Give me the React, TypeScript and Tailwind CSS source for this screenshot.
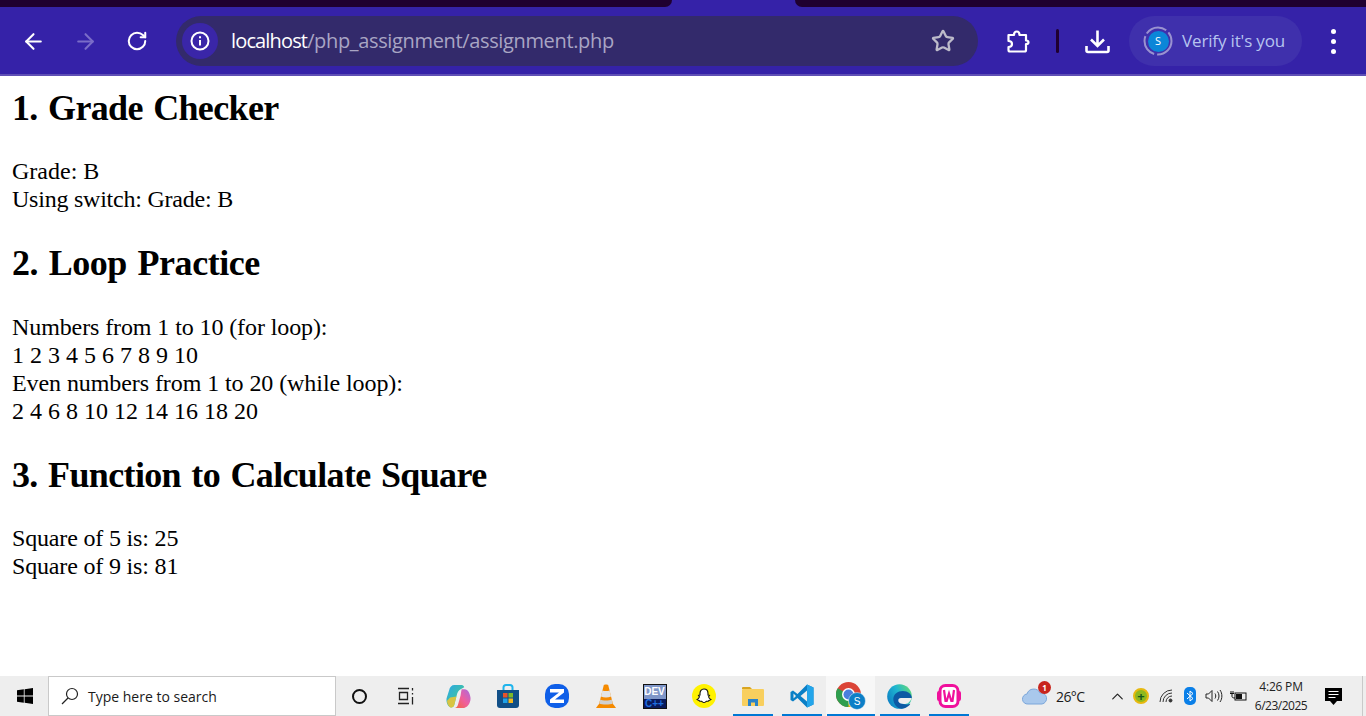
import { ArrowLeft, ArrowRight, RotateCw, Star, ChevronUp } from 'lucide-react'
import type { ReactNode } from 'react'

const Heading = ({ children, className }: { children: ReactNode, className: string }) => (
    <h2 className={`text-[36px] leading-[41px] font-bold [word-spacing:2px] ${className}`}>{children}</h2>
)

const Slot = ({ children, line, active }: { children: ReactNode, line?: boolean, active?: boolean }) => (
    <div className={`relative h-10 w-[49px] shrink-0 flex items-center justify-center ${active ? 'bg-[#f7f7f7]' : ''}`}>
        {children}
        {line && <div className={`absolute bottom-0 h-[2px] bg-[#0078d4] ${active ? 'left-px right-0' : 'left-[5px] right-[4px]'}`} />}
    </div>
)

const Copilot = () => (
    <svg width="25" height="25" viewBox="0 0 24 24">
        <defs>
            <linearGradient id="cpa" x1="0" y1="0" x2="1" y2="1">
                <stop offset="0" stopColor="#2aa7e8" />
                <stop offset="0.6" stopColor="#3fc0a8" />
                <stop offset="1" stopColor="#8fd14a" />
            </linearGradient>
            <linearGradient id="cpb" x1="0" y1="1" x2="1" y2="0">
                <stop offset="0" stopColor="#f2653a" />
                <stop offset="0.5" stopColor="#ef5f9e" />
                <stop offset="1" stopColor="#a86be0" />
            </linearGradient>
        </defs>
        <path d="M8 1h7c1.500 0 2 1 2.500 2L14 5c-2 1-3 3-3.500 5L8 20c-.5 2-2 3-3.500 2.500C2 22 0 18 .5 14L3 6c.6-3 2.500-5 5-5z" fill="url(#cpa)" />
        <path d="M4 13l6-1-2 8c-.5 2-2 3-3.500 2.500C3 22 1 19 1 16z" fill="#f5c52e" opacity="0.850" />
        <path d="M15 5h3c3 0 5 4 5.500 8 .5 4-2 9-6 10H8c2 0 3-1 3.500-3L14 11c.3-2 .5-4 1-6z" fill="url(#cpb)" />
    </svg>
)

const Store = () => (
    <svg width="24" height="25" viewBox="0 0 24 25">
        <path d="M7.500 7V3.500C7.500 2 8.500 1 10 1h4c1.500 0 2.500 1 2.500 2.500V7" fill="none" stroke="#1fb4ec" strokeWidth="2" />
        <path d="M1 6h22v15c0 2-1 3-3 3H4c-2 0-3-1-3-3z" fill="#114f87" />
        <rect x="7" y="9" width="4.500" height="4.500" fill="#e8522a" />
        <rect x="12.500" y="9" width="4.500" height="4.500" fill="#7db928" />
        <rect x="7" y="14.500" width="4.500" height="4.500" fill="#1fa2e8" />
        <rect x="12.500" y="14.500" width="4.500" height="4.500" fill="#f5b81e" />
    </svg>
)

const Zoom = () => (
    <svg width="24" height="24" viewBox="0 0 24 24">
        <rect width="24" height="24" rx="10" fill="#0f5fe8" />
        <path d="M5 5h14v3.500L10 15.500h9V19H5v-3.500L14 8.500H5z" fill="#fff" />
    </svg>
)

const Vlc = () => (
    <svg width="20" height="25" viewBox="0 0 20 25">
        <path d="M0 24l2.500-3.500h15L20 24z" fill="#f58a00" />
        <path d="M7.800 1c.5-.8 3.900-.8 4.400 0l5 20c-3 1.500-11.400 1.500-14.400 0z" fill="#f58a00" />
        <path d="M6.400 6.500c2 .8 5.200.8 7.200 0l1.500 6c-3 1.200-7.200 1.200-10.200 0z" fill="#e4e4e4" />
        <path d="M4.300 15.500c2 1.300 9.400 1.300 11.400 0l1 4c-2.500 1.300-10.900 1.300-13.400 0z" fill="#d0d0d0" />
    </svg>
)

const Chrome = () => (
    <svg width="30" height="28" viewBox="0 0 30 28">
        <circle cx="12.500" cy="12.500" r="12.500" fill="#db4437" />
        <path d="M12.500 12.500L1.700 6.200A12.500 12.500 0 0 0 12.500 25l6-10.500z" fill="#2f9e4f" />
        <path d="M12.500 12.500h12A12.500 12.500 0 0 1 12.500 25z" fill="#f4c20d" />
        <circle cx="12.500" cy="12.500" r="6.500" fill="#fff" />
        <circle cx="12.500" cy="12.500" r="5" fill="#4a7fdd" />
        <circle cx="21" cy="19" r="8.500" fill="#0d7fc7" stroke="#f7f7f7" strokeWidth="0.500" />
        <text x="21" y="22.500" textAnchor="middle" fontSize="10" fontFamily="Liberation Sans, sans-serif" fill="#fff">S</text>
    </svg>
)

const Edge = () => (
    <svg width="25" height="25" viewBox="0 0 25 25">
        <defs>
            <linearGradient id="edga" x1="0" y1="0.700" x2="1" y2="0.200">
                <stop offset="0" stopColor="#0d7fc4" />
                <stop offset="0.500" stopColor="#1fb6d0" />
                <stop offset="1" stopColor="#62d977" />
            </linearGradient>
        </defs>
        <circle cx="12.500" cy="12.500" r="12.300" fill="url(#edga)" />
        <path d="M24.800 14c0-4-4-7-9-7-5 0-9.500 3-9.500 8 0 5 4 9.800 8.500 9.700 3.500-.3 7.500-2.500 8.500-5-2 1-8 1.500-9.500-1.700-.8-2 .5-3.500 2.500-3.500h8.500z" fill="#0c59a4" />
        <path d="M14 14c-2 0-3.300 1.500-2.500 3.500 1.500 3.200 7.500 2.700 9.500 1.700 1.500-1.500 3.300-3.500 3.800-5.200z" fill="#eeeeee" />
    </svg>
)

const Wamp = () => (
    <svg width="24" height="24" viewBox="0 0 24 24">
        <rect x="0" y="7" width="24" height="10" rx="2" fill="#f0109c" />
        <rect x="3" y="1.500" width="18" height="21" rx="5.500" fill="#fff" stroke="#f0109c" strokeWidth="3" />
        <path d="M7 6l1.500 11h1.200L12 9.500 14.300 17h1.200L17 6" fill="none" stroke="#f0109c" strokeWidth="2.200" />
    </svg>
)

const App = () => {
    return (
        <div className="h-[716px] w-[1366px] overflow-hidden flex flex-col bg-white font-['Liberation_Serif',serif] text-black">
            <header className="h-[76px] shrink-0 bg-[#3522a8] border-b-2 border-[#5f4fb5] flex flex-col rounded-tl-[4px]">
                <div className="h-[7px] flex justify-between">
                    <div className="w-[672px] bg-[#1f0030] rounded-br-[8px]" />
                    <div className="w-[571px] bg-[#1f0030] rounded-bl-[8px]" />
                </div>
                <div className="flex-1 flex items-center font-['Open_Sans',sans-serif] pt-px">
                    <div className="flex items-center w-[176px] pl-[21px] gap-[27px]">
                        <ArrowLeft size={25} strokeWidth={2} className="text-white" />
                        <ArrowRight size={25} strokeWidth={2} className="text-[#7a6cc8]" />
                        <RotateCw size={22} strokeWidth={2.200} className="ml-px text-white" />
                    </div>
                    <div className="w-[802px] h-[50px] rounded-full bg-[#332a6b] flex items-center pl-[6px] pr-[23px]">
                        <div className="w-9 h-9 rounded-full bg-[#3a26a8] flex items-center justify-center">
                            <svg width="20" height="20" viewBox="0 0 20 20" fill="none" stroke="#fff" strokeWidth="2">
                                <circle cx="10" cy="10" r="8.500" />
                                <path d="M10 9v5.500M10 5.200v2" />
                            </svg>
                        </div>
                        <div className="ml-[13px] text-[20px] tracking-[-0.35px] text-[#a9a5c4] flex-1 whitespace-nowrap">
                            <span className="text-white tracking-[-0.85px]">localhost</span>/php_assignment/assignment.php
                        </div>
                        <Star size={24} strokeWidth={2.300} className="text-[#bdbbca]" />
                    </div>
                    <div className="ml-[27px] w-[26px] flex justify-center">
                        <svg width="25" height="25" viewBox="0 0 25 25" fill="none" stroke="#fff" strokeWidth="2.200" strokeLinejoin="round">
                            <path d="M2.500 6H8c0-2 1-3.500 2.800-3.500S13.500 4 13.500 6h6.500v5.500c1.500 0 2.500.5 2.500 1.800s-1 1.800-2.500 1.800V21a1.500 1.500 0 0 1-1.500 1.500H4A1.500 1.500 0 0 1 2.500 21v-3c2 0 3.500-1 3.500-3s-1.500-3-3.500-3z" />
                        </svg>
                    </div>
                    <div className="ml-[25px] w-[3px] h-6 rounded-full bg-[#1f0030]" />
                    <div className="ml-[25px] w-[26px] flex justify-center">
                        <svg width="25" height="25" viewBox="0 0 25 25" fill="none" stroke="#fff" strokeWidth="2.600">
                            <path d="M12.500 1.500v15M6 10.500l6.500 6.500 6.500-6.500" />
                            <path d="M1.500 17v4.500a1.500 1.500 0 0 0 1.500 1.500h19a1.500 1.500 0 0 0 1.500-1.500V17" />
                        </svg>
                    </div>
                    <div className="ml-[19px] w-[173px] h-[50px] rounded-full bg-[#3f30ac] flex items-center pl-[14px]">
                        <div className="relative w-[30px] h-[30px] flex items-center justify-center">
                            <svg width="30" height="30" viewBox="0 0 30 30" fill="none" className="absolute inset-0">
                                <circle cx="15" cy="15" r="13.500" stroke="#9a92d0" strokeWidth="2" strokeDasharray="22 3" />
                            </svg>
                            <div className="w-[21px] h-[21px] rounded-full bg-[#0b86d8] text-white text-[11px] flex items-center justify-center">S</div>
                        </div>
                        <span className="ml-[9px] text-[17px] tracking-[-0.15px] text-[#b6c4f0] whitespace-nowrap">Verify it's you</span>
                    </div>
                    <div className="ml-[29px] flex flex-col gap-[5px]">
                        <div className="w-[5px] h-[5px] rounded-full bg-white" />
                        <div className="w-[5px] h-[5px] rounded-full bg-white" />
                        <div className="w-[5px] h-[5px] rounded-full bg-white" />
                    </div>
                </div>
            </header>

            <main className="flex-1 px-3 pt-3 text-[24px] leading-[28px]">
                <Heading className="mb-[28px] tracking-[-0.65px]">1. Grade Checker</Heading>
                <div>Grade: B</div>
                <div className="tracking-[-0.23px]">Using switch: Grade: B</div>
                <Heading className="mt-[30px] mb-[29px] tracking-[-0.44px]">2. Loop Practice</Heading>
                <div className="tracking-[-0.1px]">Numbers from 1 to 10 (for loop):</div>
                <div>1 2 3 4 5 6 7 8 9 10</div>
                <div className="tracking-[-0.08px]">Even numbers from 1 to 20 (while loop):</div>
                <div>2 4 6 8 10 12 14 16 18 20</div>
                <Heading className="mt-[30px] mb-[28px] tracking-[-0.64px]">3. Function to Calculate Square</Heading>
                <div className="tracking-[-0.17px]">Square of 5 is: 25</div>
                <div className="tracking-[-0.17px]">Square of 9 is: 81</div>
            </main>

            <footer className="h-10 shrink-0 bg-[#eeeeee] flex items-center font-['Open_Sans',sans-serif] text-[#1a1a1a]">
                <div className="w-12 shrink-0 flex justify-center pl-[2px]">
                    <svg width="16" height="16" viewBox="0 0 16 16" fill="#000">
                        <path d="M0 2.300l6.800-1v6.300H0zM7.600 1.200L16 0v7.600H7.600zM0 8.400h6.800v6.300l-6.800-1zM7.600 8.400H16V16l-8.400-1.200z" />
                    </svg>
                </div>
                <div className="w-[288px] shrink-0 h-10 bg-white border border-[#c9c9c9] flex items-center pl-[12px]">
                    <svg width="18" height="18" viewBox="0 0 18 18" fill="none" stroke="#222" strokeWidth="1.200">
                        <circle cx="11" cy="7" r="5.500" />
                        <path d="M7 11l-6 6" />
                    </svg>
                    <span className="ml-[9px] text-[14px]">Type here to search</span>
                </div>
                <div className="w-[47px] shrink-0 flex justify-center">
                    <div className="w-[15px] h-[15px] rounded-full border-[2.500px] border-[#111]" />
                </div>
                <div className="w-[51px] shrink-0 flex justify-center pr-[5px]">
                    <svg width="18" height="18" viewBox="0 0 18 18" fill="none" stroke="#222" strokeWidth="1.300">
                        <path d="M1 1.500h11M1 16.500h11M2.500 5.500h8v7h-8zM15.500 1v2.500M15.500 6v1.500M15.500 10v7.500" />
                    </svg>
                </div>
                <Slot><Copilot /></Slot>
                <Slot><Store /></Slot>
                <Slot><Zoom /></Slot>
                <Slot><Vlc /></Slot>
                <Slot>
                    <div className="w-6 h-[25px] bg-[#0a1a5c] border border-[#111] flex flex-col items-center overflow-hidden font-['Liberation_Sans',sans-serif] font-bold">
                        <div className="w-full h-[14px] bg-[#7f96c8] text-white text-[10px] leading-[14px] text-center">DEV</div>
                        <div className="text-[#1f6fe0] text-[10px] leading-[10px]">C++</div>
                    </div>
                </Slot>
                <Slot>
                    <div className="w-6 h-6 rounded-full bg-[#fff200] flex items-center justify-center">
                        <svg width="16" height="16" viewBox="0 0 16 16" fill="#fff" stroke="#111" strokeWidth="1.100">
                            <path d="M8 1c2.800 0 4 2 4 4.500v1.500l1.500.3-.9 1.500c.3 1.200 1.400 2.300 2.400 2.700-.6.800-1.800.8-2.300 1.200-.4.800-1.300.4-2.200.6-.9.400-1.300 1.200-2.500 1.200s-1.600-.8-2.500-1.200c-.9-.2-1.800.2-2.200-.6-.5-.4-1.700-.4-2.300-1.200 1-.4 2.100-1.500 2.400-2.700l-.9-1.500L4 7V5.500C4 3 5.200 1 8 1z" />
                        </svg>
                    </div>
                </Slot>
                <Slot line>
                    <svg width="22" height="20" viewBox="0 0 22 20">
                        <path d="M0 2a1 1 0 0 1 1-1h7l2 2h-10z" fill="#d9a520" />
                        <rect x="0" y="3" width="22" height="17" rx="1" fill="#f8cf5e" />
                        <path d="M6 20v-7h10v7h-3v-3.500H9V20z" fill="#2a83c9" />
                    </svg>
                </Slot>
                <Slot line>
                    <svg width="24" height="24" viewBox="0 0 24 24">
                        <path d="M17 0.500L7.500 10 3 6.500 0.500 8v8L3 17.500l4.500-3.500L17 23.500l6.500-3V3.500z" fill="#0a7fc6" />
                        <path d="M17 0.500l6.500 3v17l-6.500 3z" fill="#23a5ea" />
                        <path d="M17 6.500L10.500 12l6.500 5.500z" fill="#eeeeee" />
                        <path d="M3.500 9.500L6 12l-2.500 2.500z" fill="#eeeeee" />
                    </svg>
                </Slot>
                <Slot line active><Chrome /></Slot>
                <div className="w-px h-10 shrink-0 bg-[#d4d4d4] -ml-[3px] mr-[2px]" />
                <Slot line><Edge /></Slot>
                <Slot line><Wamp /></Slot>
                <div className="ml-[49px] w-[26px] shrink-0 flex justify-center relative">
                    <svg width="26" height="18" viewBox="0 0 26 18">
                        <path d="M6 17a5 5 0 0 1-1-10 7 7 0 0 1 13-1 5.500 5.500 0 0 1 2 11z" fill="#a9c8ec" stroke="#7ba6da" />
                    </svg>
                    <div className="absolute -top-[6px] right-[-3px] w-[13px] h-[13px] rounded-full bg-[#c8241c] text-white text-[8px] leading-[13px] text-center font-bold">1</div>
                </div>
                <span className="ml-[8px] text-[14px] tracking-[-0.6px] w-[32px] shrink-0">26°C</span>
                <ChevronUp size={19} strokeWidth={1.500} className="ml-[20px] shrink-0 text-[#222]" />
                <div className="ml-[6px] w-[16px] h-[16px] shrink-0 rounded-full bg-[#8fb81e] border-2 border-[#e7b90f] flex items-center justify-center text-[#15591c] text-[13px] leading-none font-bold">+</div>
                <div className="ml-[9px] w-[18px] shrink-0 flex justify-center">
                    <svg width="16" height="14" viewBox="0 0 16 14" fill="none" stroke="#333" strokeWidth="1">
                        <path d="M1 13A12 12 0 0 1 13 1M4 13A9 9 0 0 1 13 4M7 13a6 6 0 0 1 6-6" />
                        <circle cx="11.500" cy="11.500" r="1.500" fill="#333" />
                    </svg>
                </div>
                <div className="ml-[8px] w-[12px] h-[18px] shrink-0 rounded-[5px] bg-[#0a7fe8] flex items-center justify-center">
                    <svg width="8" height="12" viewBox="0 0 8 12" fill="none" stroke="#fff" strokeWidth="1">
                        <path d="M1 3l6 5.500-3 2.500V1l3 2.500L1 9" />
                    </svg>
                </div>
                <div className="ml-[9px] w-[18px] shrink-0 flex justify-center">
                    <svg width="18" height="14" viewBox="0 0 18 14" fill="none" stroke="#222" strokeWidth="1">
                        <path d="M1 5v4h2.500L7 12.500v-11L3.500 5zM10 4.500c1 1.500 1 3.500 0 5M12.500 2.500c2 2.500 2 6.500 0 9M15 1c2.500 3.500 2.500 8.500 0 12" />
                    </svg>
                </div>
                <div className="ml-[6px] w-[18px] shrink-0 flex justify-center">
                    <svg width="17" height="12" viewBox="0 0 17 12" fill="none" stroke="#111" strokeWidth="1">
                        <rect x="5" y="3" width="11" height="7" />
                        <rect x="6" y="4" width="6" height="5" fill="#111" stroke="none" />
                        <path d="M1 1v2M3 1v2M0 3.500h4M2 3.500v3c0 1 1 1.500 3 1.500" />
                    </svg>
                </div>
                <div className="w-[68px] shrink-0 text-center text-[12px] leading-[19px] tracking-[-0.2px] text-[#222]">
                    <div>4:26 PM</div>
                    <div className="tracking-[-0.5px]">6/23/2025</div>
                </div>
                <div className="ml-[6px] w-[24px] shrink-0 flex justify-center">
                    <svg width="17" height="17" viewBox="0 0 17 17">
                        <path d="M0 0h17v13h-5l-3.500 4L5 13H0z" fill="#000" />
                        <path d="M3.500 3.500h10M3.500 6.500h10M3.500 9.500h7" stroke="#fff" />
                    </svg>
                </div>
                <div className="ml-[17px] w-px h-10 shrink-0 bg-[#c9c9c9]" />
            </footer>
        </div>
    )
}

export default App
